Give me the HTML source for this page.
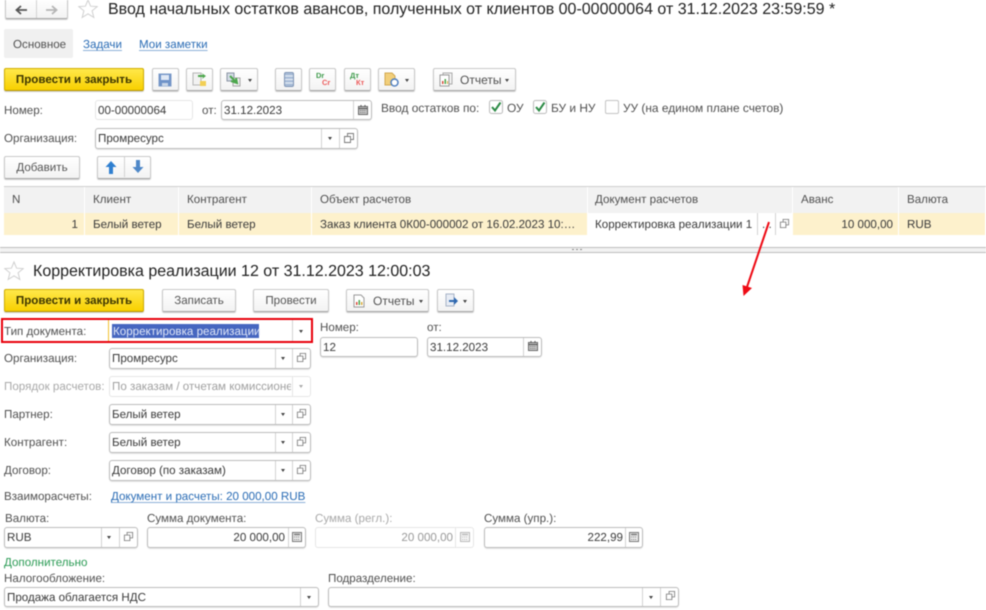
<!DOCTYPE html>
<html lang="ru">
<head>
<meta charset="utf-8">
<title>Ввод начальных остатков</title>
<style>
html,body{margin:0;padding:0;background:#fff}
#p{position:relative;width:986px;height:610px;overflow:hidden;background:#fff;font:11.6px/14px "Liberation Sans",sans-serif;color:#505050;filter:blur(.4px);text-rendering:geometricPrecision}
#p div,#p span.a,#p svg{position:absolute}
.t{position:absolute;white-space:nowrap;line-height:14px;margin-top:1px}
.w{font-size:11.9px}
.v{color:#3a3a3a}
.l{color:#2a6cb5;text-decoration:underline;text-decoration-color:#8db1d8;text-underline-offset:2px}
.btn{position:absolute;box-sizing:border-box;height:23px;border:1px solid #c8c8c8;border-bottom-color:#a8a8a8;border-radius:2px;background:linear-gradient(#fff,#f3f3f3);box-shadow:0 1px 1px #ccc;text-align:center;line-height:21px;color:#555}
.y{position:absolute;box-sizing:border-box;height:23px;width:140px;left:4px;border:1px solid #d0ad00;border-bottom-color:#b79500;border-radius:2px;background:linear-gradient(#ffe84a,#f8d000);box-shadow:0 1px 1px #ccc;text-align:center;font-weight:bold;line-height:21px;color:#3c3500}
.f{position:absolute;box-sizing:border-box;border:1px solid #bcbcbc;border-radius:3px;background:#fff;box-shadow:0 1px 1px #e4e4e4}
.f.lg{border-color:#e6e6e6;box-shadow:none}
.d{position:absolute;width:1px;background:#d2d2d2}
.drop{position:absolute;width:0;height:0;border-left:2.5px solid transparent;border-right:2.5px solid transparent;border-top:3px solid #444}
.h{position:absolute;top:187px;height:26px;background:#f2f2f2;border-right:1px solid #fff;box-sizing:border-box}
.r{position:absolute;top:213px;height:22px;background:#fdf1cc;border-right:1px solid #fff;box-sizing:border-box}
</style>
</head>
<body>
<div id="p">
<svg width="0" height="0" style="position:absolute">
<defs>
<symbol id="o" viewBox="0 0 12 12"><path d="M4.500 4V1.500H10.500V7.500H8M1.500 4.500H7.500V10.500H1.500Z" fill="none" stroke="#777" stroke-width=".9"/></symbol>
<symbol id="cal" viewBox="0 0 12 12"><path d="M1.500 2.500H10.500V10.500H1.500Z" fill="#d0d0d0" stroke="#666"/><path d="M1.500 4.500H10.500" stroke="#555" stroke-width="1.200"/><path d="M3 6.500H9M3 8.500H9" stroke="#666" stroke-dasharray="1 .8"/><path d="M4 1V3M8 1V3" stroke="#555"/></symbol>
<symbol id="calc" viewBox="0 0 12 12"><path d="M1.500 1.500H10.500V10.500H1.500Z" fill="#eee" stroke="#777"/><path d="M3 3.500H9" stroke="#777" stroke-width="1.500"/><path d="M3 6H9M3 8.500H9" stroke="#888" stroke-dasharray="1.200 .8"/></symbol>
<symbol id="star" viewBox="0 0 20 20"><path d="M10 1L12.600 7.200 19.200 7.600 14.100 11.800 15.800 18.400 10 14.800 4.200 18.400 5.900 11.800 .8 7.600 7.400 7.200Z" fill="#fff" stroke="#d0d0d0"/></symbol>
<symbol id="chk" viewBox="0 0 14 14"><rect x=".5" y=".5" width="13" height="13" rx="2" fill="#fff" stroke="#bbb"/><path d="M3 7L6 10.500 11.500 2.500" fill="none" stroke="#2c8a45" stroke-width="2"/></symbol>
</defs>
</svg>

<!-- top header -->
<div class="btn" style="left:5px;top:-3px;width:63px;height:22px"></div>
<div class="d" style="left:36px;top:0;height:18px"></div>
<svg style="left:14px;top:4px" width="14" height="12" viewBox="0 0 14 12"><path d="M13 6H3M7 2L2.500 6 7 10" fill="none" stroke="#555" stroke-width="1.800"/></svg>
<svg style="left:45px;top:4px" width="14" height="12" viewBox="0 0 14 12"><path d="M1 6H11M7 2L11.500 6 7 10" fill="none" stroke="#b5b5b5" stroke-width="1.800"/></svg>
<svg style="left:78px;top:-1px" width="20" height="20"><use href="#star"/></svg>
<span class="t" style="left:108px;top:-1px;font-size:16px;line-height:20px;color:#222">Ввод начальных остатков авансов, полученных от клиентов 00-00000064 от 31.12.2023 23:59:59 *</span>

<div style="left:4px;top:29px;width:69px;height:29px;background:#f0f0f0;border-radius:2px"></div>
<span class="t" style="left:13px;top:37px">Основное</span>
<span class="t l" style="left:83px;top:37px">Задачи</span>
<span class="t l" style="left:139px;top:37px">Мои заметки</span>

<!-- top toolbar -->
<div class="y" style="top:68px">Провести и закрыть</div>
<div class="btn" style="left:152px;top:68px;width:27px"></div>
<svg style="left:158px;top:73px" width="14" height="14" viewBox="0 0 14 14"><path d="M1 1H13V13H1Z" fill="#6f93c8" stroke="#7d9bc8"/><path d="M3 2H11V7H3Z" fill="#dfe8f5"/><path d="M4 10H10V13H4Z" fill="#c9d6e8"/></svg>
<div class="btn" style="left:186px;top:68px;width:27px"></div>
<svg style="left:192px;top:72px" width="15" height="15" viewBox="0 0 15 15"><path d="M1 1H9V13H1Z" fill="#f2f2f2" stroke="#b5b5b5"/><path d="M6 3H11L9.500 1 14 4 10 7 11 5H6Z" fill="#4ca64c"/><path d="M8 9H14V14H8Z" fill="#f2cf55"/></svg>
<div class="btn" style="left:220px;top:68px;width:38px"></div>
<svg style="left:226px;top:72px" width="15" height="15" viewBox="0 0 15 15"><path d="M1 1H8V9H1Z" fill="#d4dce6" stroke="#8a94a3"/><path d="M7 6H14V14H7Z" fill="#f1f1f1" stroke="#a5a5a5"/><path d="M4 4L11 11M5 9L11 11 10 6" fill="none" stroke="#4ca64c" stroke-width="2"/></svg>
<div class="drop" style="left:248px;top:79px"></div>
<div class="btn" style="left:275px;top:68px;width:27px"></div>
<svg style="left:284px;top:72px" width="10" height="15" viewBox="0 0 10 15"><rect x=".5" y=".5" width="9" height="14" rx="1.500" fill="#a9bdd8" stroke="#7f95b5"/><path d="M1 4H9M1 7.500H9M1 11H9" stroke="#eef3f9"/></svg>
<div class="btn" style="left:309px;top:68px;width:27px"></div>
<span class="t" style="left:316px;top:71px;font-size:7.500px;line-height:8px;font-weight:bold;color:#3d9a4a">Dr</span>
<span class="t" style="left:322px;top:78px;font-size:7.500px;line-height:8px;font-weight:bold;color:#ec5a5a">Cr</span>
<div class="btn" style="left:344px;top:68px;width:27px"></div>
<span class="t" style="left:350px;top:71px;font-size:7.500px;line-height:8px;font-weight:bold;color:#3d9a4a">Дт</span>
<span class="t" style="left:356px;top:78px;font-size:7.500px;line-height:8px;font-weight:bold;color:#ec5a5a">Кт</span>
<div class="btn" style="left:378px;top:68px;width:37px"></div>
<svg style="left:384px;top:72px" width="15" height="15" viewBox="0 0 15 15"><path d="M1 1H8L11 4V13H1Z" fill="#f2cf7b" stroke="#d2a850"/><circle cx="10.500" cy="10.500" r="3.500" fill="#fff" stroke="#4f7fc0" stroke-width="1.500"/></svg>
<div class="drop" style="left:405px;top:79px"></div>
<div class="btn" style="left:433px;top:68px;width:83px"></div>
<svg style="left:439px;top:72px" width="15" height="15" viewBox="0 0 15 15"><path d="M4 1H13V12H4Z" fill="#f4f4f4" stroke="#aaa"/><path d="M1 3H10V14H1Z" fill="#fff" stroke="#999"/><path d="M3 12V9H4.500V12Z" fill="#d94a3a"/><path d="M5.500 12V7H7V12Z" fill="#4ca64c"/><path d="M8 12V9H9V12Z" fill="#d9a93a"/></svg>
<span class="t" style="left:460px;top:72px;font-size:12px">Отчеты</span>
<div class="drop" style="left:505px;top:79px"></div>

<!-- номер -->
<span class="t" style="left:4px;top:103px">Номер:</span>
<div class="f lg" style="left:95px;top:100px;width:98px;height:20px"></div>
<span class="t v" style="left:98px;top:103px">00-00000064</span>
<span class="t" style="left:202px;top:103px">от:</span>
<div class="f" style="left:221px;top:100px;width:151px;height:20px"></div>
<span class="t v" style="left:224px;top:103px">31.12.2023</span>
<div class="d" style="left:353px;top:101px;height:18px"></div>
<svg style="left:357px;top:104px" width="12" height="12"><use href="#cal"/></svg>
<span class="t w" style="left:381px;top:100px">Ввод остатков по:</span>
<svg style="left:489px;top:100px" width="14" height="14"><use href="#chk"/></svg>
<span class="t w" style="left:507px;top:100px">ОУ</span>
<svg style="left:533px;top:100px" width="14" height="14"><use href="#chk"/></svg>
<span class="t w" style="left:551px;top:100px">БУ и НУ</span>
<div style="left:605px;top:100px;width:14px;height:14px;box-sizing:border-box;border:1px solid #c4c4c4;border-radius:2px"></div>
<span class="t w" style="left:623px;top:100px">УУ (на едином плане счетов)</span>

<span class="t" style="left:4px;top:131px">Организация:</span>
<div class="f" style="left:95px;top:128px;width:263px;height:21px"></div>
<span class="t v" style="left:98px;top:131px">Промресурс</span>
<div class="d" style="left:321px;top:129px;height:19px"></div>
<div class="d" style="left:339px;top:129px;height:19px"></div>
<div class="drop" style="left:328px;top:137px"></div>
<svg style="left:343px;top:132px" width="12" height="12"><use href="#o"/></svg>

<div class="btn" style="left:4px;top:156px;width:76px">Добавить</div>
<div class="btn" style="left:97px;top:156px;width:54px"></div>
<div class="d" style="left:124px;top:157px;height:20px"></div>
<svg style="left:105px;top:161px" width="12" height="13" viewBox="0 0 12 13"><path d="M6 0L11.500 6H8V13H4V6H.5Z" fill="#2f7fd0"/></svg>
<svg style="left:132px;top:160px" width="12" height="13" viewBox="0 0 12 13"><path d="M6 13L11.500 7H8V0H4V7H.5Z" fill="#4f88c8"/></svg>

<!-- table -->
<div style="left:4px;top:186px;width:982px;height:1px;background:#cfcfcf"></div>
<div class="h" style="left:4px;width:81px"></div>
<div class="h" style="left:85px;width:94px"></div>
<div class="h" style="left:179px;width:133px"></div>
<div class="h" style="left:312px;width:276px"></div>
<div class="h" style="left:588px;width:205px"></div>
<div class="h" style="left:793px;width:106px"></div>
<div class="h" style="left:899px;width:87px"></div>
<span class="t" style="left:12px;top:192px">N</span>
<span class="t" style="left:93px;top:192px">Клиент</span>
<span class="t" style="left:187px;top:192px">Контрагент</span>
<span class="t" style="left:320px;top:192px">Объект расчетов</span>
<span class="t" style="left:595px;top:192px">Документ расчетов</span>
<span class="t" style="left:801px;top:192px">Аванс</span>
<span class="t" style="left:907px;top:192px">Валюта</span>

<div class="r" style="left:4px;width:81px"></div>
<div class="r" style="left:85px;width:94px"></div>
<div class="r" style="left:179px;width:133px"></div>
<div class="r" style="left:312px;width:276px"></div>
<div class="r" style="left:793px;width:106px"></div>
<div class="r" style="left:899px;width:87px"></div>
<span class="t v" style="right:908px;top:217px">1</span>
<span class="t v" style="left:93px;top:217px">Белый ветер</span>
<span class="t v" style="left:187px;top:217px">Белый ветер</span>
<span class="t v" style="left:320px;top:217px">Заказ клиента 0К00-000002 от 16.02.2023 10:…</span>
<span class="t v" style="left:595px;top:217px">Корректировка реализации 1</span>
<div class="d" style="left:757px;top:213px;height:22px"></div>
<div class="d" style="left:775px;top:213px;height:22px"></div>
<span class="t v" style="left:762px;top:217px">...</span>
<svg style="left:779px;top:218px" width="11" height="11"><use href="#o"/></svg>
<span class="t v" style="right:93px;top:217px">10 000,00</span>
<span class="t v" style="left:907px;top:217px">RUB</span>

<!-- splitter -->
<div style="left:0;top:247px;width:986px;height:6px;box-sizing:border-box;border-top:1px solid #bdbdbd;border-bottom:1px solid #bdbdbd;background:#f2f2f2"></div>
<div style="left:572px;top:249px;width:10px;height:1px;background:repeating-linear-gradient(90deg,#888 0 2px,transparent 2px 4px)"></div>

<!-- bottom header -->
<svg style="left:4px;top:261px" width="20" height="20"><use href="#star"/></svg>
<span class="t" style="left:33px;top:261px;font-size:16px;line-height:20px;color:#222">Корректировка реализации 12 от 31.12.2023 12:00:03</span>

<div class="y" style="top:289px">Провести и закрыть</div>
<div class="btn" style="left:162px;top:289px;width:74px">Записать</div>
<div class="btn" style="left:253px;top:289px;width:76px">Провести</div>
<div class="btn" style="left:346px;top:289px;width:83px"></div>
<svg style="left:353px;top:294px" width="12" height="14" viewBox="0 0 12 14"><path d="M1 1H8L11 4V13H1Z" fill="#fff" stroke="#999"/><path d="M3 11V8H4.500V11Z" fill="#d94a3a"/><path d="M5.500 11V6H7V11Z" fill="#4ca64c"/><path d="M8 11V8H9.500V11Z" fill="#d9a93a"/></svg>
<span class="t" style="left:373px;top:293px;font-size:12px">Отчеты</span>
<div class="drop" style="left:419px;top:300px"></div>
<div class="btn" style="left:437px;top:289px;width:37px"></div>
<svg style="left:444px;top:293px" width="15" height="15" viewBox="0 0 15 15"><path d="M2 1H10V13H2Z" fill="#e8edf5" stroke="#a7b3c6"/><path d="M5 7H10V4L14 8 10 12V9H5Z" fill="#2e68b0"/></svg>
<div class="drop" style="left:463px;top:300px"></div>

<!-- тип документа -->
<div style="left:1px;top:318px;width:312px;height:25px;box-sizing:border-box;border:2px solid #e8000b"></div>
<div style="left:108px;top:320px;width:1px;height:21px;background:#f2c230"></div>
<span class="t" style="left:4px;top:324px">Тип документа:</span>
<div style="left:112px;top:324px;width:147px;height:14px;background:#4666c0"></div>
<span class="t" style="left:113px;top:324px;color:#dfe6f7">Корректировка реализации</span>
<div class="d" style="left:292px;top:320px;height:21px"></div>
<div class="drop" style="left:299px;top:330px"></div>

<!-- rows -->
<span class="t" style="left:4px;top:351px">Организация:</span>
<div class="f" style="left:109px;top:348px;width:202px;height:21px"></div>
<span class="t v" style="left:112px;top:351px">Промресурс</span>
<div class="d" style="left:275px;top:349px;height:19px"></div><div class="d" style="left:292px;top:349px;height:19px"></div>
<div class="drop" style="left:281px;top:357px"></div>
<svg style="left:296px;top:352px" width="11" height="11"><use href="#o"/></svg>

<span class="t" style="left:4px;top:379px;color:#a9a9a9">Порядок расчетов:</span>
<div class="f lg" style="left:109px;top:376px;width:202px;height:21px"></div>
<span class="t" style="left:112px;top:379px;width:179px;overflow:hidden;color:#a0a0a0">По заказам / отчетам комиссионера</span>
<div class="d" style="left:292px;top:377px;height:19px;background:#e6e6e6"></div>
<div class="drop" style="left:299px;top:385px;border-top-color:#aaa"></div>

<span class="t" style="left:4px;top:407px">Партнер:</span>
<div class="f" style="left:109px;top:404px;width:202px;height:21px"></div>
<span class="t v" style="left:112px;top:407px">Белый ветер</span>
<div class="d" style="left:275px;top:405px;height:19px"></div><div class="d" style="left:292px;top:405px;height:19px"></div>
<div class="drop" style="left:281px;top:413px"></div>
<svg style="left:296px;top:408px" width="11" height="11"><use href="#o"/></svg>

<span class="t" style="left:4px;top:435px">Контрагент:</span>
<div class="f" style="left:109px;top:432px;width:202px;height:21px"></div>
<span class="t v" style="left:112px;top:435px">Белый ветер</span>
<div class="d" style="left:275px;top:433px;height:19px"></div><div class="d" style="left:292px;top:433px;height:19px"></div>
<div class="drop" style="left:281px;top:441px"></div>
<svg style="left:296px;top:436px" width="11" height="11"><use href="#o"/></svg>

<span class="t" style="left:4px;top:463px">Договор:</span>
<div class="f" style="left:109px;top:460px;width:202px;height:21px"></div>
<span class="t v" style="left:112px;top:463px">Договор (по заказам)</span>
<div class="d" style="left:275px;top:461px;height:19px"></div><div class="d" style="left:292px;top:461px;height:19px"></div>
<div class="drop" style="left:281px;top:469px"></div>
<svg style="left:296px;top:464px" width="11" height="11"><use href="#o"/></svg>

<!-- номер / от -->
<span class="t" style="left:320px;top:320px">Номер:</span>
<div class="f" style="left:320px;top:337px;width:98px;height:20px"></div>
<span class="t v" style="left:323px;top:340px">12</span>
<span class="t" style="left:427px;top:320px">от:</span>
<div class="f" style="left:427px;top:337px;width:115px;height:20px"></div>
<span class="t v" style="left:430px;top:340px">31.12.2023</span>
<div class="d" style="left:523px;top:338px;height:18px"></div>
<svg style="left:527px;top:340px" width="12" height="12"><use href="#cal"/></svg>

<!-- взаиморасчеты -->
<span class="t" style="left:4px;top:489px">Взаиморасчеты:</span>
<span class="t l" style="left:111px;top:489px">Документ и расчеты: 20 000,00 RUB</span>

<span class="t" style="left:5px;top:511px">Валюта:</span>
<div class="f" style="left:4px;top:527px;width:134px;height:21px"></div>
<span class="t v" style="left:7px;top:530px">RUB</span>
<div class="d" style="left:101px;top:528px;height:19px"></div><div class="d" style="left:119px;top:528px;height:19px"></div>
<div class="drop" style="left:107px;top:536px"></div>
<svg style="left:123px;top:531px" width="11" height="11"><use href="#o"/></svg>

<span class="t" style="left:147px;top:511px">Сумма документа:</span>
<div class="f" style="left:147px;top:527px;width:159px;height:21px"></div>
<span class="t v" style="right:701px;top:530px">20 000,00</span>
<div class="d" style="left:288px;top:528px;height:19px"></div>
<svg style="left:291px;top:531px" width="12" height="12"><use href="#calc"/></svg>

<span class="t" style="left:315px;top:511px;color:#a9a9a9">Сумма (регл.):</span>
<div class="f lg" style="left:315px;top:527px;width:159px;height:21px"></div>
<span class="t" style="right:533px;top:530px;color:#9a9a9a">20 000,00</span>
<div class="d" style="left:455px;top:528px;height:19px;background:#e6e6e6"></div>
<svg style="left:459px;top:531px;opacity:.5" width="12" height="12"><use href="#calc"/></svg>

<span class="t" style="left:484px;top:511px">Сумма (упр.):</span>
<div class="f" style="left:484px;top:527px;width:159px;height:21px"></div>
<span class="t v" style="right:363px;top:530px">222,99</span>
<div class="d" style="left:625px;top:528px;height:19px"></div>
<svg style="left:628px;top:531px" width="12" height="12"><use href="#calc"/></svg>

<span class="t" style="left:4px;top:555px;color:#2b9b55">Дополнительно</span>
<span class="t" style="left:4px;top:571px">Налогообложение:</span>
<div class="f" style="left:4px;top:587px;width:315px;height:20px"></div>
<span class="t v" style="left:7px;top:590px">Продажа облагается НДС</span>
<div class="d" style="left:300px;top:588px;height:18px"></div>
<div class="drop" style="left:307px;top:596px"></div>

<span class="t" style="left:328px;top:571px">Подразделение:</span>
<div class="f" style="left:328px;top:587px;width:351px;height:20px"></div>
<div class="d" style="left:642px;top:588px;height:18px"></div><div class="d" style="left:660px;top:588px;height:18px"></div>
<div class="drop" style="left:649px;top:596px"></div>
<svg style="left:665px;top:590px" width="11" height="11"><use href="#o"/></svg>

<!-- red arrow -->
<svg style="left:0;top:0" width="986" height="610"><path d="M769 222L747 287" stroke="#ee0a14" stroke-width="2" fill="none"/><path d="M743.500 296L742.500 285 752 288Z" fill="#ee0a14"/></svg>
</div>
</body>
</html>
